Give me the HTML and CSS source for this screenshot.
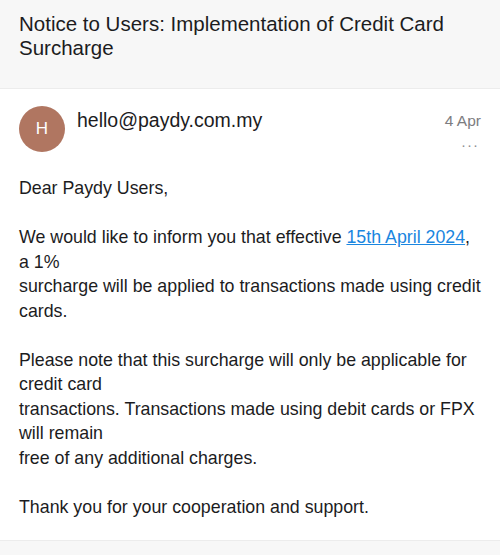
FILE: index.html
```html
<!DOCTYPE html>
<html lang="en">
<head>
  <meta charset="UTF-8">
  <meta name="viewport" content="width=device-width, initial-scale=1.0">
  <title>Notice to Users</title>
  <link rel="stylesheet" href="styles.css">
</head>
<body>
  <div class="subject">
    <h1>Notice to Users: Implementation of Credit Card Surcharge</h1>
  </div>

  <div class="message">
    <div class="sender">
      <div class="avatar">H</div>
      <div class="from">hello@paydy.com.my</div>
      <div class="meta">
        <div class="date">4 Apr</div>
        <div class="more">&middot;&middot;&middot;</div>
      </div>
    </div>

    <div class="body">
      <p>Dear Paydy Users,</p>
      <p>We would like to inform you that effective <a href="#">15th April 2024</a>,<br>a 1%<br>surcharge will be applied to transactions made using credit<br>cards.</p>
      <p>Please note that this surcharge will only be applicable for<br>credit card<br>transactions. Transactions made using debit cards or FPX<br>will remain<br>free of any additional charges.</p>
      <p>Thank you for your cooperation and support.</p>
    </div>
  </div>

  <div class="footer"></div>
</body>
</html>
```

FILE: styles.css
```css
body {
  margin: 0;
  font-family: "Liberation Sans", Arial, sans-serif;
  background-color: #fff;
  color: #1c1c1e;
}

.subject {
  background-color: #f7f7f7;
  border-bottom: 1px solid #ececec;
  height: 89px;
  box-sizing: border-box;
  padding: 12px 19px 0;
}

h1 {
  margin: 0;
  font-size: 20.5px;
  font-weight: 400;
  line-height: 24px;
}

.message {
  height: 451px;
  padding: 0 19px;
}

.sender {
  display: flex;
  align-items: flex-start;
  padding-top: 17px;
}

.avatar {
  width: 46px;
  height: 46px;
  border-radius: 50%;
  background-color: #b07661;
  color: #fff;
  font-size: 17px;
  display: flex;
  align-items: center;
  justify-content: center;
  flex-shrink: 0;
}

.from {
  flex: 1;
  margin-left: 12px;
  font-size: 19.5px;
  line-height: 24px;
  margin-top: 2px;
}

.meta {
  display: flex;
  flex-direction: column;
  align-items: flex-end;
}

.date {
  font-size: 15.5px;
  color: #7c7c80;
  line-height: 24px;
  margin-top: 3px;
}

.more {
  color: #8e8e93;
  font-size: 15px;
  letter-spacing: 1px;
  margin-top: 3px;
  margin-right: 2px;
}

.body {
  margin-top: 23px;
  font-size: 17.8px;
  line-height: 24.5px;
  white-space: nowrap;
}

.body p {
  margin: 0 0 24.5px;
}

.body a {
  color: #1a86e0;
}

.footer {
  background-color: #f7f7f7;
  border-top: 1px solid #ececec;
  height: 20px;
}
```
